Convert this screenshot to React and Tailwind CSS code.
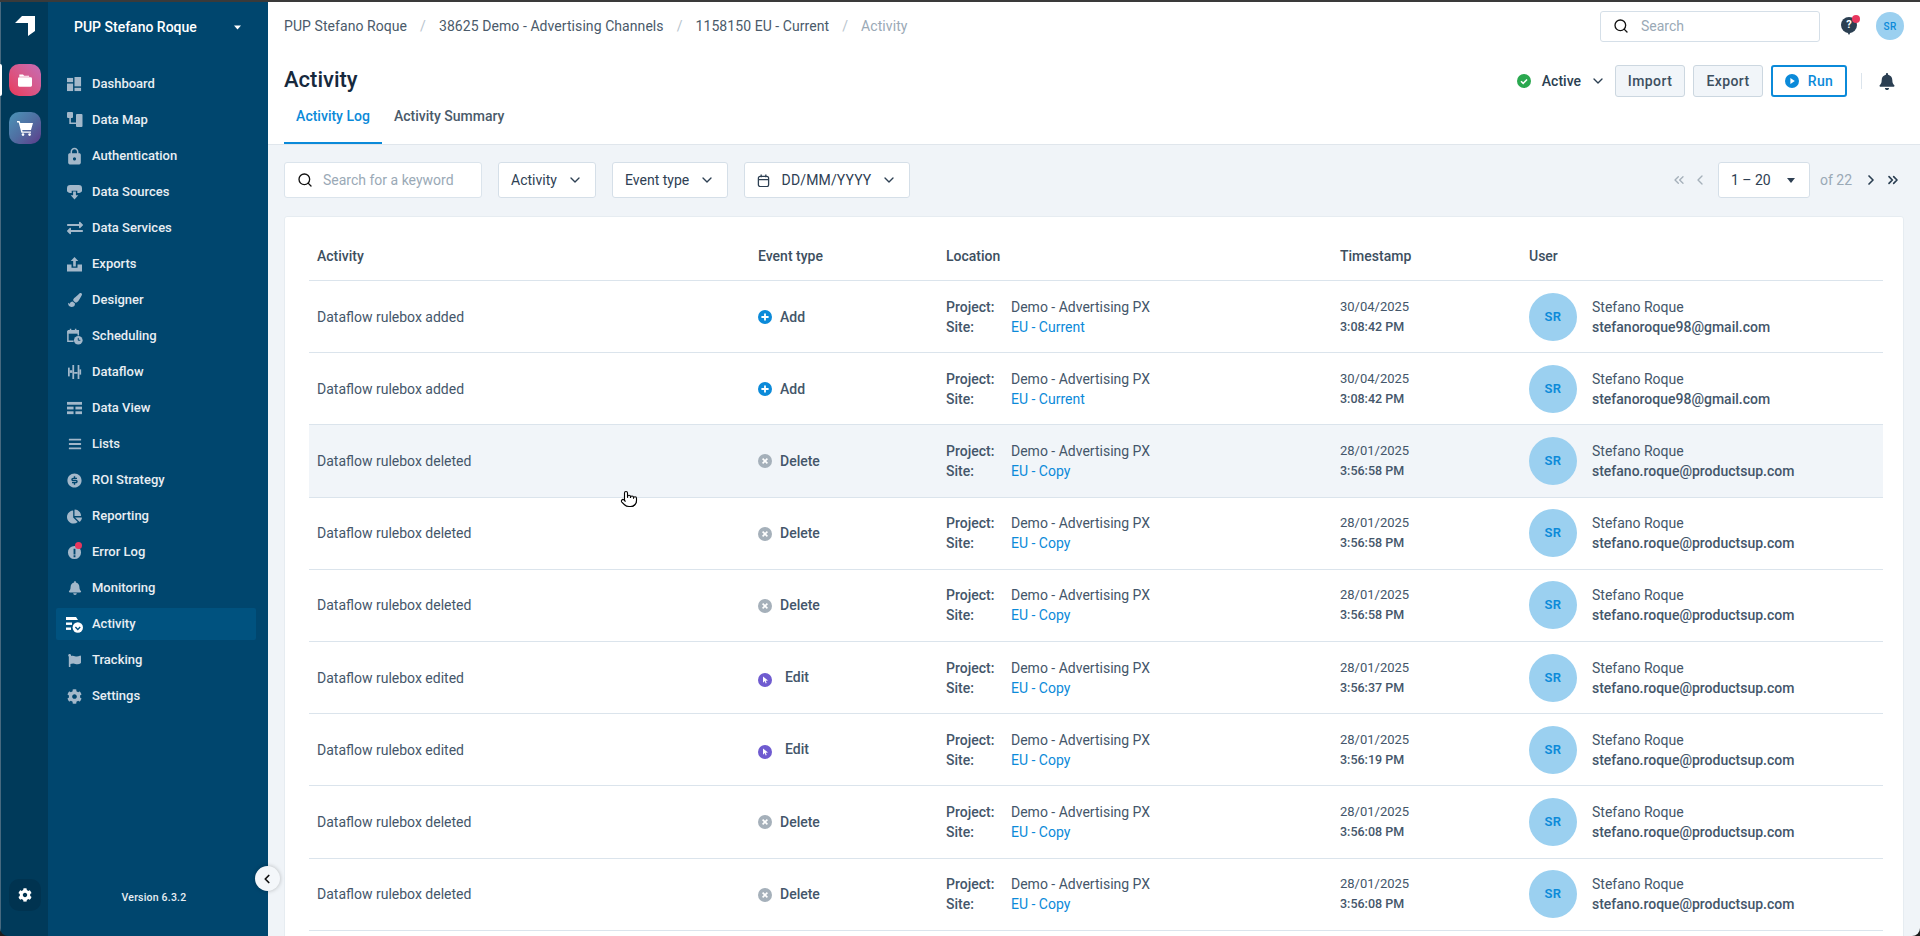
import { ChevronDown, ChevronLeft, ChevronRight, ChevronsLeft, ChevronsRight, Search, Pointer } from 'lucide-react'
import { FaExchangeAlt, FaPaintBrush, FaChartPie, FaBell, FaFlag, FaCog, FaBars } from 'react-icons/fa'
import { MdLock } from 'react-icons/md'
import { RiMoneyDollarCircleFill } from 'react-icons/ri'

const font = { fontFamily: 'Roboto, sans-serif' }

// hand drawn nav icons, the ones the packages don't have
const DashboardIcon = () => (
  <svg viewBox="0 0 16 16" className="w-[15px] h-[15px]" fill="currentColor">
    <rect x="0" y="1" width="6.5" height="4.5" />
    <rect x="8" y="0" width="7" height="10" />
    <rect x="0" y="7" width="6.5" height="8" />
    <rect x="8" y="11.5" width="7" height="3.5" />
  </svg>
)
const DataMapIcon = () => (
  <svg viewBox="0 0 16 16" className="w-[16px] h-[16px]" fill="currentColor">
    <rect x="0" y="0" width="6" height="6" rx="1" />
    <rect x="9" y="2" width="6.5" height="13" rx="1" />
    <path d="M2.3 6h1.6v4.4H9V12H2.3z" />
  </svg>
)
const DataSourcesIcon = () => (
  <svg viewBox="0 0 16 16" className="w-[15px] h-[15px]" fill="currentColor">
    <path d="M3.5 0h9A3.5 3.5 0 0 1 16 3.5 3.5 3.5 0 0 1 12.5 8.5H11V6H5v2.5H3.5A3.5 3.5 0 0 1 0 3.5 3.5 3.5 0 0 1 3.5 0z" />
    <path d="M6.5 7h3v4H12l-4 4.5L4 11h2.5z" />
  </svg>
)
const ExportsIcon = () => (
  <svg viewBox="0 0 16 16" className="w-[15px] h-[15px]" fill="currentColor">
    <path d="M8 0l4 4.2H9.4V10H6.6V4.2H4z" />
    <path d="M0 8h4.8v3.5h6.4V8H16v7.5H0z" />
  </svg>
)
const SchedulingIcon = () => (
  <svg viewBox="0 0 18 18" className="w-[17px] h-[17px]" fill="none">
    <path d="M2 3h11v5M2 3v11h6" stroke="currentColor" strokeWidth="1.6" />
    <rect x="1.5" y="3" width="12" height="3" fill="currentColor" />
    <rect x="4" y="0.8" width="1.6" height="3" fill="currentColor" />
    <rect x="9.4" y="0.8" width="1.6" height="3" fill="currentColor" />
    <circle cx="13" cy="13" r="4.6" fill="currentColor" />
    <path d="M13 10.5V13h2.2" stroke="#00466e" strokeWidth="1" />
  </svg>
)
const DataflowIcon = () => (
  <svg viewBox="0 0 16 16" className="w-[14px] h-[14px]" fill="currentColor">
    <rect x="0" y="3" width="2" height="10" />
    <rect x="5" y="0" width="2" height="16" />
    <rect x="11" y="0" width="2" height="16" />
    <rect x="2" y="6" width="3" height="3" />
    <rect x="7" y="8" width="4" height="2" />
    <rect x="13" y="5" width="2" height="6" />
  </svg>
)
const DataViewIcon = () => (
  <svg viewBox="0 0 16 16" className="w-[15px] h-[15px]" fill="currentColor">
    <rect x="0" y="1" width="16" height="3" />
    <rect x="0" y="6" width="7" height="3" />
    <rect x="9" y="6" width="7" height="3" />
    <rect x="0" y="11" width="7" height="3" />
    <rect x="9" y="11" width="7" height="3" />
  </svg>
)
const ErrorLogIcon = () => (
  <div className="relative w-[15px] h-[15px]">
    <svg viewBox="0 0 16 16" className="w-[15px] h-[15px]" fill="currentColor">
      <path fillRule="evenodd" d="M8 1a7 7 0 1 1 0 14A7 7 0 0 1 8 1zM7 4v6h2V4zM7 11v2h2v-2z" />
    </svg>
    <span className="absolute -top-[3px] right-0 w-[7px] h-[7px] rounded-full bg-[#e8375e]" />
  </div>
)
const ActivityIcon = () => (
  <svg viewBox="0 0 17 17" className="w-[17px] h-[17px] text-white" fill="currentColor">
    <path d="M0 1h10l2 3H0z" />
    <rect x="0" y="6.5" width="6" height="2.4" />
    <rect x="0" y="11.5" width="5" height="2.4" />
    <circle cx="11.8" cy="11.5" r="5.2" />
    <path d="M9.4 11l2.4 2.4 2.4-2.4" stroke="#00527f" strokeWidth="1.4" fill="none" />
  </svg>
)

const navItems = [
  { label: 'Dashboard', icon: <DashboardIcon /> },
  { label: 'Data Map', icon: <DataMapIcon /> },
  { label: 'Authentication', icon: <MdLock className="w-[19px] h-[19px]" /> },
  { label: 'Data Sources', icon: <DataSourcesIcon /> },
  { label: 'Data Services', icon: <FaExchangeAlt className="w-[16px] h-[16px]" /> },
  { label: 'Exports', icon: <ExportsIcon /> },
  { label: 'Designer', icon: <FaPaintBrush className="w-[14px] h-[14px]" /> },
  { label: 'Scheduling', icon: <SchedulingIcon /> },
  { label: 'Dataflow', icon: <DataflowIcon /> },
  { label: 'Data View', icon: <DataViewIcon /> },
  { label: 'Lists', icon: <FaBars className="w-[14px] h-[14px]" /> },
  { label: 'ROI Strategy', icon: <RiMoneyDollarCircleFill className="w-[17px] h-[17px]" /> },
  { label: 'Reporting', icon: <FaChartPie className="w-[15px] h-[15px]" /> },
  { label: 'Error Log', icon: <ErrorLogIcon /> },
  { label: 'Monitoring', icon: <FaBell className="w-[14px] h-[14px]" /> },
  { label: 'Activity', icon: <ActivityIcon />, active: true },
  { label: 'Tracking', icon: <FaFlag className="w-[13px] h-[13px]" /> },
  { label: 'Settings', icon: <FaCog className="w-[15px] h-[15px]" /> },
]

const GMAIL = 'stefanoroque98@gmail.com'
const PUP = 'stefano.roque@productsup.com'

const rows = [
  { activity: 'Dataflow rulebox added', type: 'Add', site: 'EU - Current', date: '30/04/2025', time: '3:08:42 PM', email: GMAIL },
  { activity: 'Dataflow rulebox added', type: 'Add', site: 'EU - Current', date: '30/04/2025', time: '3:08:42 PM', email: GMAIL },
  { activity: 'Dataflow rulebox deleted', type: 'Delete', site: 'EU - Copy', date: '28/01/2025', time: '3:56:58 PM', email: PUP, hover: true },
  { activity: 'Dataflow rulebox deleted', type: 'Delete', site: 'EU - Copy', date: '28/01/2025', time: '3:56:58 PM', email: PUP },
  { activity: 'Dataflow rulebox deleted', type: 'Delete', site: 'EU - Copy', date: '28/01/2025', time: '3:56:58 PM', email: PUP },
  { activity: 'Dataflow rulebox edited', type: 'Edit', site: 'EU - Copy', date: '28/01/2025', time: '3:56:37 PM', email: PUP },
  { activity: 'Dataflow rulebox edited', type: 'Edit', site: 'EU - Copy', date: '28/01/2025', time: '3:56:19 PM', email: PUP },
  { activity: 'Dataflow rulebox deleted', type: 'Delete', site: 'EU - Copy', date: '28/01/2025', time: '3:56:08 PM', email: PUP },
  { activity: 'Dataflow rulebox deleted', type: 'Delete', site: 'EU - Copy', date: '28/01/2025', time: '3:56:08 PM', email: PUP },
]

function EventType({ type }) {
  if (type === 'Add') {
    return (
      <div className="flex items-center gap-2">
        <svg viewBox="0 0 14 14" className="w-[14px] h-[14px]">
          <circle cx="7" cy="7" r="7" fill="#0b8ad9" />
          <path d="M7 3.4v7.2M3.4 7h7.2" stroke="#fff" strokeWidth="1.8" />
        </svg>
        <span className="font-medium">Add</span>
      </div>
    )
  }
  if (type === 'Delete') {
    return (
      <div className="flex items-center gap-2">
        <svg viewBox="0 0 14 14" className="w-[14px] h-[14px]">
          <circle cx="7" cy="7" r="7" fill="#a5b0ba" />
          <path d="M4.6 4.6l4.8 4.8M9.4 4.6l-4.8 4.8" stroke="#fff" strokeWidth="1.6" />
        </svg>
        <span className="font-medium">Delete</span>
      </div>
    )
  }
  return (
    <div className="flex items-center gap-[13px]">
      <svg viewBox="0 0 14 14" className="w-[14px] h-[14px] mt-[3px]">
        <circle cx="7" cy="7" r="7" fill="#6f5bd0" />
        <path d="M5 3.4l5 4.1-2.3.2 1 2.3-1 .4-1-2.3L5 9.8z" fill="#fff" />
      </svg>
      <span className="font-medium -mt-[1px]">Edit</span>
    </div>
  )
}

function Avatar() {
  return (
    <div className="w-12 h-12 rounded-full bg-[#9bd0f0] flex items-center justify-center text-[#0b8ad9] text-[13px] font-semibold tracking-[0.04em] shrink-0">
      SR
    </div>
  )
}

function Row({ row }) {
  return (
    <div className={`grid grid-cols-[441px_188px_394px_189px_1fr] items-center h-[72.2px] border-b border-[#dbe4ec] text-[14px] text-[#44566a] ${row.hover ? 'bg-[#f1f5f9]' : ''}`}>
      <div className="pl-2 mt-[1px]">{row.activity}</div>
      <div className="pl-2 mt-[1px]"><EventType type={row.type} /></div>
      <div className="pl-2 leading-5">
        <div className="flex">
          <span className="w-[65px] font-medium">Project:</span>
          <span>Demo - Advertising PX</span>
        </div>
        <div className="flex">
          <span className="w-[65px] font-medium">Site:</span>
          <span className="text-[#0b8ad9]">{row.site}</span>
        </div>
      </div>
      <div className="pl-2 leading-5">
        <div className="text-[13px]">{row.date}</div>
        <div className="text-[12.5px] font-medium">{row.time}</div>
      </div>
      <div className="pl-2 flex items-center gap-[15px] leading-5">
        <Avatar />
        <div>
          <div>Stefano Roque</div>
          <div className="font-medium">{row.email}</div>
        </div>
      </div>
    </div>
  )
}

function FilterButton({ children, className }) {
  return (
    <button type="button" className={`h-9 flex items-center justify-between bg-white border border-[#d5dfe8] rounded-[3px] px-3 text-[14px] text-[#2e4053] ${className}`}>
      {children}
    </button>
  )
}

function Sidebar() {
  return (
    <aside className="relative w-[220px] shrink-0 bg-[#00466e] flex flex-col text-white">
      <div className="h-[66px] pl-[26px] pr-[27px] pb-[16px] flex items-center justify-between">
        <span className="text-[14px] font-medium">PUP Stefano Roque</span>
        <svg viewBox="0 0 10 6" className="w-[7px] h-[5px]" fill="currentColor"><path d="M0 0h10L5 6z" /></svg>
      </div>
      <nav className="ml-2 mr-3 flex flex-col gap-1">
        {navItems.map(item => (
          <div key={item.label} className={`h-8 flex items-center rounded-[2px] ${item.active ? 'bg-[#00527f]' : ''}`}>
            <div className={`w-9 flex items-center justify-center pl-[1px] ${item.active ? 'text-white' : 'text-[#a3b8ca]'}`}>
              {item.icon}
            </div>
            <span className="text-[13px] font-medium text-[#e8eef3]">{item.label}</span>
          </div>
        ))}
      </nav>
      <div className="mt-auto h-[78px] flex items-start justify-center pt-[32px] pr-2">
        <span className="text-[10.5px] font-medium tracking-[0.02em] text-[#e8eef3]">Version 6.3.2</span>
      </div>
      <button type="button" className="absolute right-[-12px] bottom-[45px] w-[25px] h-[25px] rounded-full bg-[#f4f7fa] shadow-[0_0_4px_rgba(0,0,0,0.25)] flex items-center justify-center text-[#111]">
        <ChevronLeft className="w-[14px] h-[14px] -ml-[1px]" strokeWidth={3} />
      </button>
    </aside>
  )
}

function Rail() {
  return (
    <div className="w-12 shrink-0 bg-[#003a5a] border-l border-[#47697f] flex flex-col items-center pl-[1px]">
      <svg viewBox="0 0 20 20" className="w-5 h-5 mt-[14px] fill-white">
        <path d="M7 0h13v15l-7 5V7H0z" />
      </svg>
      <div className="relative mt-[28px]">
        <span className="absolute -left-[9px] top-0 w-[2px] h-8 bg-white rounded-r" />
        <div className="w-8 h-8 rounded-[10px] bg-gradient-to-bl from-[#c46cb6] to-[#ea3558] flex items-center justify-center">
          <svg viewBox="0 0 16 14" className="w-[14px] h-[13px]" fill="#fff">
            <path d="M1.5 0h4.2l1.4 1.6h5.6v1H1.5z" />
            <path d="M1.5 3.4h13A1.5 1.5 0 0 1 16 4.9v7.6a1.5 1.5 0 0 1-1.5 1.5h-13A1.5 1.5 0 0 1 0 12.5V4.9a1.5 1.5 0 0 1 1.5-1.5z" />
          </svg>
        </div>
      </div>
      <div className="w-8 h-8 mt-4 rounded-[10px] bg-gradient-to-tl from-[#5a3a8a] via-[#4f6fa2] to-[#4a94b8] flex items-center justify-center">
        <svg viewBox="0 0 16 16" className="w-4 h-4" fill="#fff">
          <path d="M0 1h2.6l.7 2H16l-2 7H5.2l.4 1.4H14v1.4H4.4L1.7 2.4H0z" />
          <circle cx="6" cy="14.6" r="1.3" />
          <circle cx="12.6" cy="14.6" r="1.3" />
        </svg>
      </div>
      <div className="mt-auto mb-[25px] w-8 h-8 rounded-[10px] bg-[#003350] flex items-center justify-center">
        <FaCog className="w-[14px] h-[14px] text-white" />
      </div>
    </div>
  )
}

function TopBar() {
  return (
    <div className="h-12 flex items-center justify-between pl-4 pr-4">
      <div className="flex items-center text-[14px] text-[#4a5a6a] tracking-[0.005em]">
        <span>PUP Stefano Roque</span>
        <span className="mx-[13px] text-[#b8c4ce]">/</span>
        <span>38625 Demo - Advertising Channels</span>
        <span className="mx-[13px] text-[#b8c4ce]">/</span>
        <span>1158150 EU - Current</span>
        <span className="mx-[13px] text-[#b8c4ce]">/</span>
        <span className="text-[#9aa9b6]">Activity</span>
      </div>
      <div className="flex items-center">
        <div className="w-[220px] h-[31px] flex items-center bg-white border border-[#d5dfe8] rounded-[3px] pl-3 text-[14px] text-[#9aa9b6]">
          <Search className="w-[16px] h-[16px] text-[#111] mr-[12px]" strokeWidth={2} />
          Search
        </div>
        <div className="relative ml-5 w-[18px] h-[18px] mr-[18px]">
          <svg viewBox="0 0 18 18" className="w-[18px] h-[18px]">
            <circle cx="9" cy="8" r="8" fill="#2b3f52" />
            <path d="M6 13h6l-3 5z" fill="#2b3f52" />
          </svg>
          <span className="absolute inset-0 flex items-center justify-center text-white text-[11px] font-bold -mt-[2px]">?</span>
          <span className="absolute -top-[2px] -right-[2px] w-[8px] h-[8px] rounded-full bg-[#e8375e]" />
        </div>
        <div className="w-7 h-7 rounded-full bg-[#9bd0f0] flex items-center justify-center text-[#0b8ad9] text-[10px] font-medium tracking-[0.04em]">SR</div>
      </div>
    </div>
  )
}

function PageHeader() {
  return (
    <div className="bg-white border-b border-[#e0e6ec]">
      <TopBar />
      <div className="mt-[15px] h-8 pl-4 pr-4 flex items-center justify-between">
        <h1 className="text-[22px] font-medium text-[#16293d] leading-8 -mt-[2px]">Activity</h1>
        <div className="flex items-center">
          <svg viewBox="0 0 14 14" className="w-[14px] h-[14px]">
            <circle cx="7" cy="7" r="7" fill="#2aa84f" />
            <path d="M4 7.2l2.2 2.2L10 5.4" stroke="#fff" strokeWidth="1.5" fill="none" />
          </svg>
          <span className="ml-[11px] text-[14px] font-medium text-[#2b3f52]">Active</span>
          <ChevronDown className="ml-[9px] w-4 h-4 text-[#2b3f52]" strokeWidth={2} />
          <button type="button" className="ml-[9px] w-[70px] h-8 bg-[#f1f5f9] border border-[#ccd7e0] rounded-[3px] text-[14px] font-medium tracking-[0.03em] text-[#3d4f5f]">Import</button>
          <button type="button" className="ml-[8px] w-[70px] h-8 bg-[#f1f5f9] border border-[#ccd7e0] rounded-[3px] text-[14px] font-medium tracking-[0.03em] text-[#3d4f5f]">Export</button>
          <button type="button" className="ml-[8px] w-[76px] h-8 bg-white border-2 border-[#0b8ad9] rounded-[3px] flex items-center justify-center gap-[9px] text-[14px] font-medium tracking-[0.03em] text-[#0b8ad9]">
            <svg viewBox="0 0 14 14" className="w-[14px] h-[14px]">
              <circle cx="7" cy="7" r="7" fill="#0b8ad9" />
              <path d="M5.4 4l4.4 3-4.4 3z" fill="#fff" />
            </svg>
            Run
          </button>
          <span className="ml-[14px] w-px h-4 bg-[#dbe4ec]" />
          <FaBell className="ml-[17px] mr-[9px] w-[16px] h-[17px] text-[#2b3f52]" />
        </div>
      </div>
      <div className="pl-4 flex h-[47px] text-[14px] font-medium">
        <div className="w-[98px] pt-[9px] leading-5 text-center text-[#0b8ad9] border-b-2 border-[#0b8ad9]">Activity Log</div>
        <div className="ml-[12px] pt-[9px] leading-5 text-[#4a5a6a]">Activity Summary</div>
      </div>
    </div>
  )
}

function Filters() {
  return (
    <div className="flex items-center justify-between pt-[17px]">
      <div className="flex items-center gap-4">
        <div className="w-[198px] h-9 flex items-center bg-white border border-[#dbe4ec] rounded-[3px] pl-3 text-[14px] text-[#9aa9b6]">
          <Search className="w-[16px] h-[16px] text-[#111] mr-[10px]" strokeWidth={2} />
          Search for a keyword
        </div>
        <FilterButton className="w-[98px]">Activity<ChevronDown className="w-4 h-4" strokeWidth={2} /></FilterButton>
        <FilterButton className="w-[116px]">Event type<ChevronDown className="w-4 h-4" strokeWidth={2} /></FilterButton>
        <FilterButton className="w-[166px]">
          <svg viewBox="0 0 14 14" className="w-[13px] h-[13px]" fill="none" stroke="currentColor" strokeWidth="1.4">
            <rect x="1.5" y="2.5" width="11" height="11" rx="2" />
            <path d="M1.5 6h11M4.5 0.5v3M9.5 0.5v3" />
          </svg>
          <span className="tracking-[0.01em] ml-[2px]">DD/MM/YYYY</span>
          <ChevronDown className="w-4 h-4" strokeWidth={2} />
        </FilterButton>
      </div>
      <div className="flex items-center text-[14px] pr-[3px]">
        <ChevronsLeft className="w-[16px] h-[16px] text-[#a5b0ba]" strokeWidth={2} />
        <ChevronLeft className="ml-[5px] w-[16px] h-[16px] text-[#a5b0ba]" strokeWidth={2} />
        <div className="ml-[10px] w-[92px] h-9 flex items-center justify-between bg-white border border-[#d5dfe8] rounded-[3px] pl-[12px] pr-[14px] text-[#2e4053]">
          <span>1 – 20</span>
          <svg viewBox="0 0 10 6" className="w-[8px] h-[5px]" fill="currentColor"><path d="M0 0h10L5 6z" /></svg>
        </div>
        <span className="ml-[10px] text-[#9aa9b6]">of 22</span>
        <ChevronRight className="ml-[11px] w-[16px] h-[16px] text-[#2b3f52]" strokeWidth={2.5} />
        <ChevronsRight className="ml-[6px] w-[16px] h-[16px] text-[#2b3f52]" strokeWidth={2.5} />
      </div>
    </div>
  )
}

export default function App() {
  return (
    <div className="relative h-screen w-full overflow-hidden flex flex-col bg-[#1d1d1d]" style={font}>
      <div className="h-[2px] bg-[#3a3a3a] shrink-0" />
      <div className="flex flex-1 min-h-0 rounded-b-[8px] overflow-hidden">
        <Rail />
        <Sidebar />
        <main className="flex-1 min-w-0 flex flex-col bg-[#f0f4f8]">
          <PageHeader />
          <div className="flex-1 min-h-0 px-4">
            <Filters />
            <div className="mt-[18px] h-full bg-white border border-[#e6ecf1] rounded-t-[3px] pl-6 pr-5">
              <div className="grid grid-cols-[441px_188px_394px_189px_1fr] items-center h-[64px] pt-4 border-b border-[#dbe4ec] text-[14px] font-medium text-[#3d4f5f]">
                <div className="pl-2">Activity</div>
                <div className="pl-2">Event type</div>
                <div className="pl-2">Location</div>
                <div className="pl-2">Timestamp</div>
                <div className="pl-2">User</div>
              </div>
              {rows.map((row, i) => <Row key={i} row={row} />)}
            </div>
          </div>
        </main>
      </div>
      <Pointer className="absolute left-[620px] top-[490px] w-[18px] h-[18px] fill-white text-black" strokeWidth={1.5} />
    </div>
  )
}
